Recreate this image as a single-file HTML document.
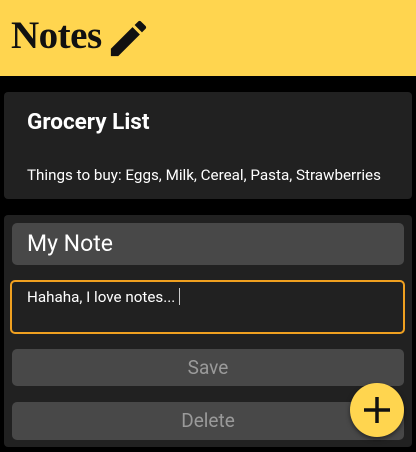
<!DOCTYPE html>
<html><head><style>
*{margin:0;padding:0;box-sizing:border-box}
body{width:416px;height:452px;background:#000;font-family:"Roboto","Liberation Sans",sans-serif;position:relative;overflow:hidden;color:#fff}
.hdr{position:absolute;left:0;top:0;width:416px;height:76px;background:#FFD54F}
.hdr h1{position:absolute;left:11px;top:13px;font-family:"Liberation Serif",serif;font-weight:bold;font-size:39px;color:#111;letter-spacing:-0.5px}
.card{position:absolute;left:4px;width:408px;background:#212121;border-radius:4px}
.abs{position:absolute}
.btn{position:absolute;left:12px;width:392px;background:#484848;border-radius:5px;color:#9a9a9a;font-size:19px;text-align:center}
</style></head><body>
<div class="hdr"><h1>Notes</h1>
<svg class="abs" style="left:105px;top:15px" width="47" height="47" viewBox="0 0 24 24"><path fill="#111" d="M3 17.25V21h3.75L17.81 9.94l-3.75-3.75L3 17.25zM20.71 7.04c.39-.39.39-1.02 0-1.41l-2.34-2.34c-.39-.39-1.02-.39-1.41 0l-1.83 1.83 3.75 3.75 1.83-1.83z"/></svg>
</div>
<div class="card" style="top:92px;height:107px">
<div class="abs" style="left:23px;top:17px;font-size:22.5px;font-weight:bold">Grocery List</div>
<div class="abs" style="left:23px;top:74px;font-size:15.2px">Things to buy: Eggs, Milk, Cereal, Pasta, Strawberries</div>
</div>
<div class="card" style="top:215px;height:232px"></div>
<div class="abs" style="left:12px;top:223px;width:392px;height:42px;background:#484848;border-radius:5px"></div>
<div class="abs" style="left:27px;top:230px;font-size:23px">My Note</div>
<div class="abs" style="left:10px;top:280px;width:395px;height:54px;border:2px solid #F0A020;border-radius:5px;background:#212121"></div>
<div class="abs" style="left:27px;top:288px;font-size:15.2px">Hahaha, I love notes... <span style="display:inline-block;width:1px;height:17px;background:#ccc;vertical-align:-3px"></span></div>
<div class="btn" style="top:349px;height:37px;line-height:37px">Save</div>
<div class="btn" style="top:402px;height:38px;line-height:38px">Delete</div>
<div class="abs" style="left:350px;top:383px;width:54px;height:54px;border-radius:50%;background:#FFD54F;box-shadow:0 2px 5px rgba(0,0,0,.5)">
<svg width="54" height="54" viewBox="0 0 54 54"><path d="M27 14v26M14 27h26" stroke="#111" stroke-width="3.5"/></svg></div>
</body></html>
